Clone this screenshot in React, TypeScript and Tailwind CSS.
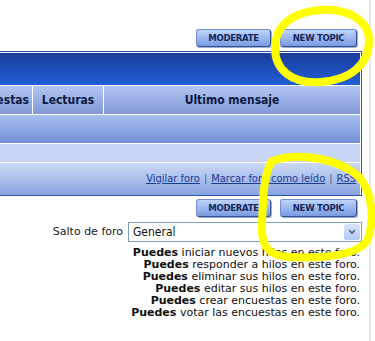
import React from "react";

const font = { fontFamily: '"DejaVu Sans Condensed", "DejaVu Sans", sans-serif' };
const wide = { fontFamily: '"DejaVu Sans", sans-serif' };

function Btn({ label }: { label: string }) {
  return (
    <div className="flex h-[18px] items-center justify-center rounded-[3px] border border-[#6f8fd2] border-b-[#34528f] border-r-[#34528f] bg-gradient-to-b from-[#c0d3fa] to-[#7a9be0] text-[9.5px] font-bold tracking-[-0.3px] text-[#142a5e] shadow-[1px_1px_0_#9aaed3]">
      {label}
    </div>
  );
}

export default function App() {
  return (
    <div className="relative h-[341px] w-[375px] overflow-hidden bg-white" style={font}>
      <div className="flex h-full">
        <div className="w-[362px] shrink-0">
          <div className="flex justify-end gap-[9px] pr-[5px] pt-[29px]">
            <div className="w-[75px]"><Btn label="MODERATE" /></div>
            <div className="w-[77px]"><Btn label="NEW TOPIC" /></div>
          </div>
          <div className="mt-[4px] border-y border-r border-[#2d52a8] bg-white pr-px pt-px">
            <div className="flex flex-col gap-px">
              <div className="h-[32px] bg-gradient-to-b from-[#1a3c98] to-[#1f5fd8]" />
              <div className="flex h-[28px] gap-px text-[12px] font-bold text-[#0c1a44]">
                <div className="flex w-[32px] items-center justify-end overflow-hidden whitespace-nowrap bg-gradient-to-b from-[#b3c6f1] to-[#8098d8] pr-[3px]">
                  <span className="shrink-0">Respuestas</span>
                </div>
                <div className="flex w-[70px] items-center justify-center bg-gradient-to-b from-[#b3c6f1] to-[#8098d8]">
                  Lecturas
                </div>
                <div className="flex flex-1 items-center justify-center bg-gradient-to-b from-[#b3c6f1] to-[#8098d8]">
                  Ultimo mensaje
                </div>
              </div>
              <div className="h-[28px] bg-gradient-to-b from-[#a9bff0] to-[#7290d6]" />
              <div className="h-[18px] bg-[#c7d6f4]" />
              <div className="flex h-[32px] items-center justify-end whitespace-nowrap bg-gradient-to-b from-[#cbd9f6] to-[#88a4df] pr-[4px] text-[11px] text-[#1c3b93]">
                <span className="underline">Vigilar foro</span>
                <span className="px-[4px] text-[#4a5f9a]">|</span>
                <span className="underline">Marcar foro como leído</span>
                <span className="px-[4px] text-[#4a5f9a]">|</span>
                <span className="underline">RSS</span>
              </div>
            </div>
          </div>
          <div className="flex justify-end gap-[9px] pr-[5px] pt-[3px]">
            <div className="w-[75px]"><Btn label="MODERATE" /></div>
            <div className="w-[77px]"><Btn label="NEW TOPIC" /></div>
          </div>
          <div className="mt-[5px] flex items-center justify-end gap-[5px] text-[12px] text-[#222]">
            <span style={wide} className="text-[11px]">Salto de foro</span>
            <div className="flex h-[20px] w-[234px] items-center justify-between border border-[#7f9db9] bg-white pl-[4px] pr-px">
              <span className="text-[#111]">General</span>
              <div className="flex h-[16px] w-[16px] items-center justify-center rounded-[2px] bg-gradient-to-b from-[#d8e4fc] to-[#b2c8f5]">
                <svg width="8" height="6" viewBox="0 0 8 6">
                  <path d="M1 1 L4 4 L7 1" stroke="#4d6185" strokeWidth="1.6" fill="none" />
                </svg>
              </div>
            </div>
          </div>
          <div style={wide} className="mt-[5px] flex flex-col items-end pr-[2px] text-[11px] leading-[12px] text-[#111]">
            <div><b>Puedes</b> iniciar nuevos hilos en este foro.</div>
            <div><b>Puedes</b> responder a hilos en este foro.</div>
            <div><b>Puedes</b> eliminar sus hilos en este foro.</div>
            <div><b>Puedes</b> editar sus hilos en este foro.</div>
            <div><b>Puedes</b> crear encuestas en este foro.</div>
            <div><b>Puedes</b> votar las encuestas en este foro.</div>
          </div>
        </div>
        <div className="ml-[7px] w-[2px] bg-[#e9e9e9]" />
      </div>
      <svg className="pointer-events-none absolute left-0 top-0" width="375" height="341" viewBox="0 0 375 341">
        <path
          d="M 320 10 C 350 8, 370 22, 369 42 C 368 64, 352 80, 320 82 C 292 84, 275 70, 275 48 C 275 26, 292 12, 320 10 Z"
          stroke="#ffff00"
          strokeWidth="8"
          fill="none"
          strokeLinejoin="round"
        />
        <path
          d="M 272 161 C 302 151, 342 160, 360 178 C 374 195, 374 225, 367 241 C 356 256, 320 259, 290 257 C 268 256, 261 246, 262 225 C 263 200, 263 175, 272 161 Z"
          stroke="#ffff00"
          strokeWidth="8"
          fill="none"
          strokeLinejoin="round"
        />
      </svg>
    </div>
  );
}
